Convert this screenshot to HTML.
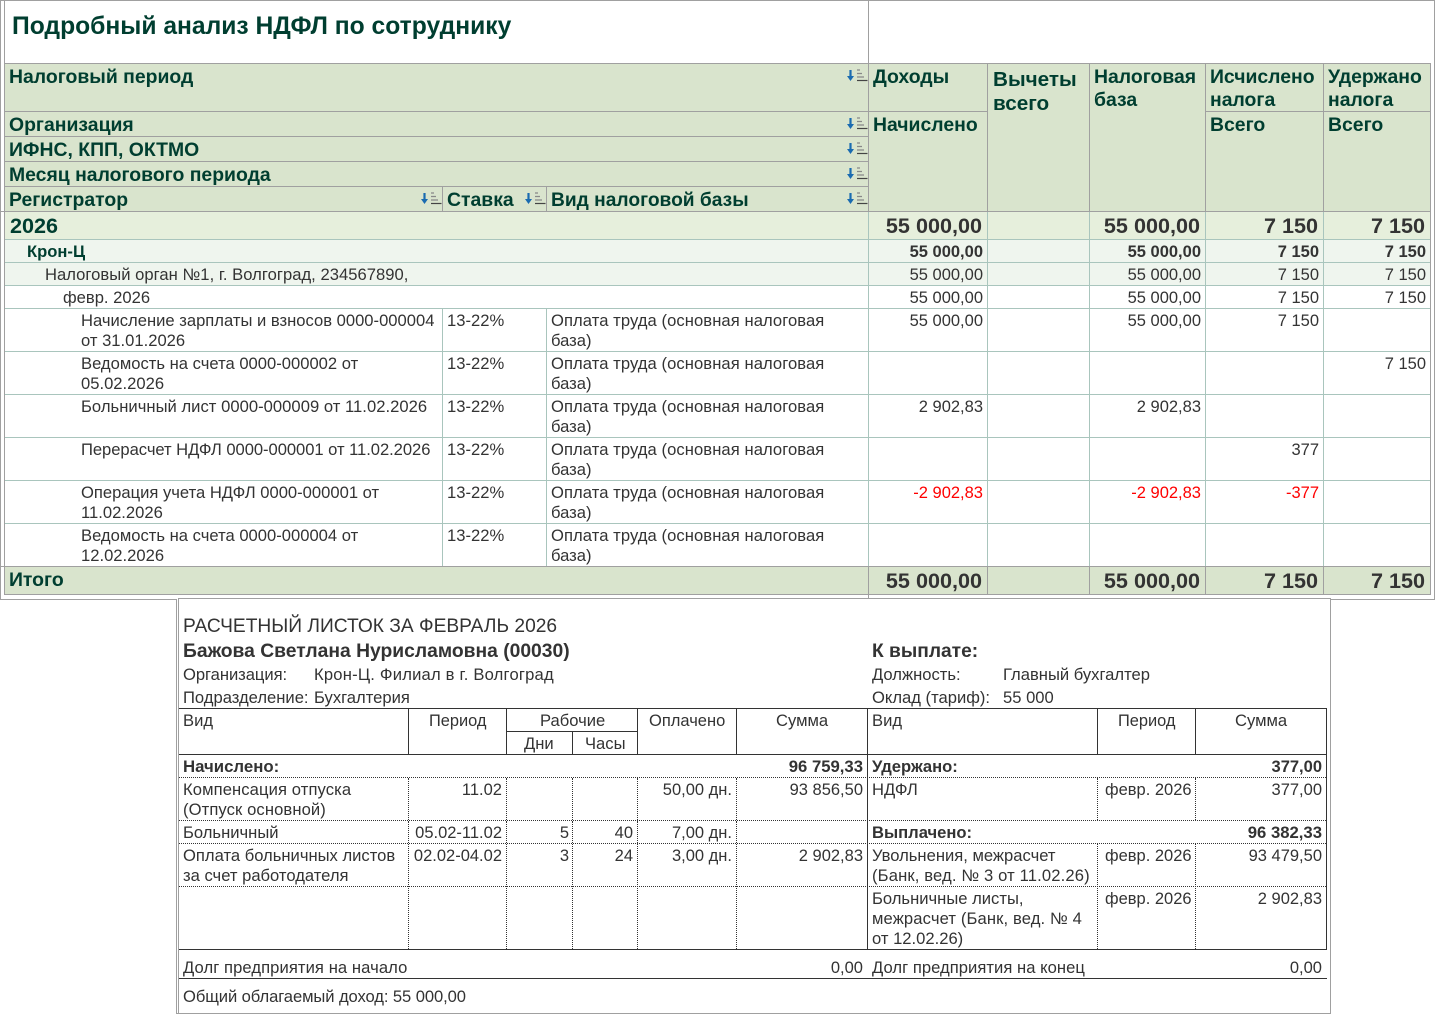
<!DOCTYPE html>
<html lang="ru"><head><meta charset="utf-8"><title>Анализ НДФЛ</title>
<style>
html,body{margin:0;padding:0;background:#fff}
#p{position:relative;width:1435px;height:1014px;overflow:hidden;background:#fff;font:16.6px/20px "Liberation Sans",sans-serif;color:#333}
#p div{position:absolute}
#p b,#p span{position:absolute;white-space:nowrap}
#p .o{left:0;width:1435px;height:1014px}
#p span[style*="right:"],#p b[style*="right:"]{font-size:16.5px}
#p .h{font-weight:bold;font-size:19.4px;line-height:25px;color:#003e30}
#p b.y{font-weight:bold;font-size:21.6px;line-height:26px;color:#333}
.g{background:#a9c5bd}.a{background:#a0a0a0}.k{background:#333}
.d{border-top:1px dotted #333;height:0}.v{border-left:1px dotted #333;width:0}
.r{color:#f00}
.m{font-size:19.2px;line-height:24px}
.w{letter-spacing:.07px}
svg{position:absolute}
</style></head><body><div id="p">
<svg width="0" height="0" style="position:absolute"><defs><symbol id="s" viewBox="0 0 21 13"><path d="M3.500 1v8" stroke="#1a6bb0" stroke-width="2.200"/><path d="M0 7h7L3.500 12z" fill="#1a6bb0"/><path d="M10 1h3M10 4.500h5M10 8h7" stroke="#888" stroke-width="1.200" fill="none"/><path d="M10 11.500h10.500" stroke="#444" stroke-width="1.200" fill="none"/></symbol></defs></svg>

<!-- fills -->
<div style="left:5px;top:64px;width:1426px;height:147px;background:#d9e4cd"></div>
<div style="left:5px;top:212px;width:1426px;height:27px;background:#e6efdc"></div>
<div style="left:5px;top:240px;width:1426px;height:45px;background:#eff5ee"></div>
<div style="left:5px;top:567px;width:1426px;height:27px;background:#d9e4cd"></div>

<!-- outer -->
<div class="a" style="left:0;top:0;width:1435px;height:1px"></div>
<div class="a" style="left:0;top:0;width:1px;height:600px"></div>
<div class="a" style="left:4px;top:0;width:1px;height:595px"></div>
<div class="a" style="left:1434px;top:0;width:1px;height:600px"></div>
<div class="a" style="left:868px;top:0;width:1px;height:64px"></div>
<div class="a" style="left:0;top:599px;width:177px;height:1px"></div>
<div class="a" style="left:1330px;top:599px;width:105px;height:1px"></div>
<div class="a" style="left:5px;top:63px;width:1426px;height:1px"></div>
<div class="a" style="left:1430px;top:63px;width:1px;height:532px"></div>
<div class="a" style="left:0;top:211px;width:1431px;height:1px"></div>
<div class="a" style="left:5px;top:111px;width:982px;height:1px"></div>
<div class="a" style="left:1205px;top:111px;width:225px;height:1px"></div>
<div class="a" style="left:5px;top:136px;width:863px;height:1px"></div>
<div class="a" style="left:5px;top:161px;width:863px;height:1px"></div>
<div class="a" style="left:5px;top:186px;width:863px;height:1px"></div>
<div class="a" style="left:442px;top:186px;width:1px;height:25px"></div>
<div class="a" style="left:546px;top:186px;width:1px;height:25px"></div>
<div class="a" style="left:868px;top:63px;width:1px;height:148px"></div>
<div class="a" style="left:987px;top:63px;width:1px;height:148px"></div>
<div class="a" style="left:1089px;top:63px;width:1px;height:148px"></div>
<div class="a" style="left:1205px;top:63px;width:1px;height:148px"></div>
<div class="a" style="left:1323px;top:63px;width:1px;height:148px"></div>

<!-- body rows -->
<div class="g" style="left:5px;top:239px;width:1425px;height:1px"></div>
<div class="g" style="left:5px;top:262px;width:1425px;height:1px"></div>
<div class="g" style="left:5px;top:285px;width:1425px;height:1px"></div>
<div class="g" style="left:5px;top:308px;width:1425px;height:1px"></div>
<div class="g" style="left:5px;top:351px;width:1425px;height:1px"></div>
<div class="g" style="left:5px;top:394px;width:1425px;height:1px"></div>
<div class="g" style="left:5px;top:437px;width:1425px;height:1px"></div>
<div class="g" style="left:5px;top:480px;width:1425px;height:1px"></div>
<div class="g" style="left:5px;top:523px;width:1425px;height:1px"></div>
<div class="a" style="left:0;top:566px;width:1431px;height:1px"></div>
<div class="a" style="left:4px;top:594px;width:1427px;height:1px"></div>
<div class="g" style="left:442px;top:308px;width:1px;height:258px"></div>
<div class="g" style="left:546px;top:308px;width:1px;height:258px"></div>
<div class="g" style="left:868px;top:212px;width:1px;height:354px"></div>
<div class="g" style="left:987px;top:212px;width:1px;height:354px"></div>
<div class="g" style="left:1089px;top:212px;width:1px;height:354px"></div>
<div class="g" style="left:1205px;top:212px;width:1px;height:354px"></div>
<div class="g" style="left:1323px;top:212px;width:1px;height:354px"></div>
<div class="a" style="left:868px;top:567px;width:1px;height:32px"></div>
<div class="a" style="left:987px;top:567px;width:1px;height:27px"></div>
<div class="a" style="left:1089px;top:567px;width:1px;height:27px"></div>
<div class="a" style="left:1205px;top:567px;width:1px;height:27px"></div>
<div class="a" style="left:1323px;top:567px;width:1px;height:27px"></div>

<!-- sort icons -->
<svg style="left:847px;top:69px" width="21" height="13"><use href="#s"/></svg>
<svg style="left:847px;top:117px" width="21" height="13"><use href="#s"/></svg>
<svg style="left:847px;top:142px" width="21" height="13"><use href="#s"/></svg>
<svg style="left:847px;top:167px" width="21" height="13"><use href="#s"/></svg>
<svg style="left:847px;top:192px" width="21" height="13"><use href="#s"/></svg>
<svg style="left:421px;top:192px" width="21" height="13"><use href="#s"/></svg>
<svg style="left:525px;top:192px" width="21" height="13"><use href="#s"/></svg>

<!-- 2026 -->
<b class="y" style="left:10px;top:213px;color:#003e30">2026</b>
<b class="y" style="right:453px;top:213px">55 000,00</b>
<b class="y" style="right:235px;top:213px">55 000,00</b>
<b class="y" style="right:117px;top:213px">7 150</b>
<b class="y" style="right:10px;top:213px">7 150</b>
<b class="y" style="right:453px;top:568px">55 000,00</b>
<b class="y" style="right:235px;top:568px">55 000,00</b>
<b class="y" style="right:117px;top:568px">7 150</b>
<b class="y" style="right:10px;top:568px">7 150</b>

<div class="o" style="top:1px">
<!-- header text -->
<b style="left:12px;top:11px;font-size:24.65px;line-height:30px;color:#003e30">Подробный анализ НДФЛ по сотруднику</b>
<span class="h" style="left:9px;top:64px">Налоговый период</span>
<span class="h" style="left:9px;top:112px">Организация</span>
<span class="h" style="left:9px;top:137px">ИФНС, КПП, ОКТМО</span>
<span class="h" style="left:9px;top:162px">Месяц налогового периода</span>
<span class="h" style="left:9px;top:187px">Регистратор</span>
<span class="h" style="left:447px;top:187px">Ставка</span>
<span class="h" style="left:551px;top:187px;font-size:19.2px">Вид налоговой базы</span>
<span class="h" style="left:873px;top:64px">Доходы</span>
<span class="h" style="left:873px;top:112px">Начислено</span>
<span class="h" style="left:993px;top:66px;font-size:20.7px">Вычеты</span>
<span class="h" style="left:993px;top:90px;font-size:20.7px">всего</span>
<span class="h" style="left:1094px;top:64px">Налоговая</span>
<span class="h" style="left:1094px;top:87px">база</span>
<span class="h" style="left:1210px;top:64px">Исчислено</span>
<span class="h" style="left:1210px;top:87px">налога</span>
<span class="h" style="left:1210px;top:112px">Всего</span>
<span class="h" style="left:1328px;top:64px">Удержано</span>
<span class="h" style="left:1328px;top:87px">налога</span>
<span class="h" style="left:1328px;top:112px">Всего</span>
<!-- Итого -->
<span class="h" style="left:9px;top:567px">Итого</span>
</div>

<!-- Крон -->
<b style="left:27px;top:242px;color:#003e30">Крон-Ц</b>
<b style="right:452px;top:242px">55 000,00</b>
<b style="right:234px;top:242px">55 000,00</b>
<b style="right:116px;top:242px">7 150</b>
<b style="right:9px;top:242px">7 150</b>
<!-- Налоговый орган -->
<span class="w" style="left:45px;top:265px;letter-spacing:.03px">Налоговый орган №1, г. Волгоград, 234567890,</span>
<span style="right:452px;top:265px">55 000,00</span>
<span style="right:234px;top:265px">55 000,00</span>
<span style="right:116px;top:265px">7 150</span>
<span style="right:9px;top:265px">7 150</span>
<!-- февр -->
<span style="left:63px;top:288px">февр. 2026</span>
<span style="right:452px;top:288px">55 000,00</span>
<span style="right:234px;top:288px">55 000,00</span>
<span style="right:116px;top:288px">7 150</span>
<span style="right:9px;top:288px">7 150</span>
<!-- detail -->
<span style="left:81px;top:311px">Начисление зарплаты и взносов 0000-000004</span>
<span style="left:81px;top:331px">от 31.01.2026</span>
<span style="left:447px;top:311px">13-22%</span>
<span class="w" style="left:551px;top:311px">Оплата труда (основная налоговая</span>
<span style="left:551px;top:331px">база)</span>
<span style="right:452px;top:311px">55 000,00</span>
<span style="right:234px;top:311px">55 000,00</span>
<span style="right:116px;top:311px">7 150</span>

<span style="left:81px;top:354px">Ведомость на счета 0000-000002 от</span>
<span style="left:81px;top:374px">05.02.2026</span>
<span style="left:447px;top:354px">13-22%</span>
<span class="w" style="left:551px;top:354px">Оплата труда (основная налоговая</span>
<span style="left:551px;top:374px">база)</span>
<span style="right:9px;top:354px">7 150</span>

<span class="w" style="left:81px;top:397px;letter-spacing:.03px">Больничный лист 0000-000009 от 11.02.2026</span>
<span style="left:447px;top:397px">13-22%</span>
<span class="w" style="left:551px;top:397px">Оплата труда (основная налоговая</span>
<span style="left:551px;top:417px">база)</span>
<span style="right:452px;top:397px">2 902,83</span>
<span style="right:234px;top:397px">2 902,83</span>

<span class="w" style="left:81px;top:440px;letter-spacing:-.05px">Перерасчет НДФЛ 0000-000001 от 11.02.2026</span>
<span style="left:447px;top:440px">13-22%</span>
<span class="w" style="left:551px;top:440px">Оплата труда (основная налоговая</span>
<span style="left:551px;top:460px">база)</span>
<span style="right:116px;top:440px">377</span>

<span style="left:81px;top:483px">Операция учета НДФЛ 0000-000001 от</span>
<span style="left:81px;top:503px">11.02.2026</span>
<span style="left:447px;top:483px">13-22%</span>
<span class="w" style="left:551px;top:483px">Оплата труда (основная налоговая</span>
<span style="left:551px;top:503px">база)</span>
<span class="r" style="right:452px;top:483px">-2 902,83</span>
<span class="r" style="right:234px;top:483px">-2 902,83</span>
<span class="r" style="right:116px;top:483px">-377</span>

<span style="left:81px;top:526px">Ведомость на счета 0000-000004 от</span>
<span style="left:81px;top:546px">12.02.2026</span>
<span style="left:447px;top:526px">13-22%</span>
<span class="w" style="left:551px;top:526px">Оплата труда (основная налоговая</span>
<span style="left:551px;top:546px">база)</span>

<!-- sheet 2 -->
<div style="left:178px;top:598px;width:1153px;height:416px;background:#fff"></div>
<div class="a" style="left:178px;top:598px;width:1153px;height:1px"></div>
<div class="a" style="left:176px;top:599px;width:1px;height:415px"></div>
<div class="a" style="left:178px;top:598px;width:1px;height:416px"></div>
<div class="a" style="left:1330px;top:598px;width:1px;height:416px"></div>
<div class="a" style="left:176px;top:1013px;width:1155px;height:1px"></div>

<span class="m" style="left:183px;top:615px">РАСЧЕТНЫЙ ЛИСТОК ЗА ФЕВРАЛЬ 2026</span>
<b class="m" style="left:183px;top:640px;font-size:19.3px">Бажова Светлана Нурисламовна (00030)</b>
<b class="m" style="left:872px;top:640px">К выплате:</b>

<!-- table lines -->
<div class="k" style="left:179px;top:708px;width:1148px;height:1px"></div>
<div class="k" style="left:179px;top:754px;width:1148px;height:1px"></div>
<div class="k" style="left:179px;top:949px;width:1148px;height:1px"></div>
<div class="k" style="left:179px;top:978px;width:1148px;height:1px"></div>
<div class="k" style="left:506px;top:731px;width:131px;height:1px"></div>
<div class="k" style="left:408px;top:708px;width:1px;height:46px"></div>
<div class="k" style="left:506px;top:708px;width:1px;height:46px"></div>
<div class="k" style="left:572px;top:731px;width:1px;height:23px"></div>
<div class="k" style="left:637px;top:708px;width:1px;height:46px"></div>
<div class="k" style="left:736px;top:708px;width:1px;height:46px"></div>
<div class="k" style="left:867px;top:708px;width:1px;height:241px"></div>
<div class="k" style="left:1097px;top:708px;width:1px;height:46px"></div>
<div class="k" style="left:1195px;top:708px;width:1px;height:46px"></div>
<div class="k" style="left:1326px;top:708px;width:1px;height:241px"></div>
<div class="d" style="left:179px;top:777px;width:1147px"></div>
<div class="d" style="left:179px;top:820px;width:1147px"></div>
<div class="d" style="left:179px;top:843px;width:1147px"></div>
<div class="d" style="left:179px;top:886px;width:1147px"></div>
<div class="v" style="left:408px;top:778px;height:42px"></div>
<div class="v" style="left:506px;top:778px;height:42px"></div>
<div class="v" style="left:572px;top:778px;height:42px"></div>
<div class="v" style="left:637px;top:778px;height:42px"></div>
<div class="v" style="left:736px;top:778px;height:42px"></div>
<div class="v" style="left:408px;top:821px;height:128px"></div>
<div class="v" style="left:506px;top:821px;height:128px"></div>
<div class="v" style="left:572px;top:821px;height:128px"></div>
<div class="v" style="left:637px;top:821px;height:128px"></div>
<div class="v" style="left:736px;top:821px;height:128px"></div>
<div class="v" style="left:1097px;top:778px;height:42px"></div>
<div class="v" style="left:1195px;top:778px;height:42px"></div>
<div class="v" style="left:1097px;top:844px;height:105px"></div>
<div class="v" style="left:1195px;top:844px;height:105px"></div>

<div class="o" style="top:1px">
<span style="left:183px;top:664px;letter-spacing:-.05px">Организация:</span>
<span style="left:314px;top:664px;letter-spacing:.2px">Крон-Ц. Филиал в г. Волгоград</span>
<span style="left:183px;top:687px">Подразделение:</span>
<span style="left:314px;top:687px">Бухгалтерия</span>
<span style="left:872px;top:664px">Должность:</span>
<span style="left:1003px;top:664px">Главный бухгалтер</span>
<span style="left:872px;top:687px">Оклад (тариф):</span>
<span style="left:1003px;top:687px">55 000</span>
<!-- table text -->
<span style="left:183px;top:710px">Вид</span>
<span style="left:429px;top:710px;font-size:16.4px">Период</span>
<span style="left:540px;top:710px">Рабочие</span>
<span style="left:649px;top:710px;font-size:16.5px">Оплачено</span>
<span style="left:776px;top:710px">Сумма</span>
<span style="left:524px;top:733px">Дни</span>
<span style="left:585px;top:733px">Часы</span>
<span style="left:872px;top:710px">Вид</span>
<span style="left:1118px;top:710px;font-size:16.4px">Период</span>
<span style="left:1235px;top:710px">Сумма</span>

<b style="left:183px;top:756px;font-size:16.8px">Начислено:</b>
<b style="right:572px;top:756px;font-size:16.7px">96 759,33</b>
<b style="left:872px;top:756px">Удержано:</b>
<b style="right:113px;top:756px">377,00</b>

<span style="left:183px;top:779px;letter-spacing:.1px">Компенсация отпуска</span>
<span style="left:183px;top:799px;letter-spacing:.1px">(Отпуск основной)</span>
<span style="right:933px;top:779px">11.02</span>
<span style="right:703px;top:779px">50,00 дн.</span>
<span style="right:572px;top:779px">93 856,50</span>
<span style="left:872px;top:779px">НДФЛ</span>
<span style="left:1105px;top:779px;font-size:16.5px">февр. 2026</span>
<span style="right:113px;top:779px">377,00</span>

<span style="left:183px;top:822px">Больничный</span>
<span style="right:933px;top:822px">05.02-11.02</span>
<span style="right:866px;top:822px">5</span>
<span style="right:802px;top:822px">40</span>
<span style="right:703px;top:822px">7,00 дн.</span>
<b style="left:872px;top:822px">Выплачено:</b>
<b style="right:113px;top:822px;font-size:16.7px">96 382,33</b>

<span style="left:183px;top:845px">Оплата больничных листов</span>
<span style="left:183px;top:865px">за счет работодателя</span>
<span style="right:933px;top:845px">02.02-04.02</span>
<span style="right:866px;top:845px">3</span>
<span style="right:802px;top:845px">24</span>
<span style="right:703px;top:845px">3,00 дн.</span>
<span style="right:572px;top:845px">2 902,83</span>
<span style="left:872px;top:845px">Увольнения, межрасчет</span>
<span style="left:872px;top:865px;letter-spacing:.14px">(Банк, вед. № 3 от 11.02.26)</span>
<span style="left:1105px;top:845px;font-size:16.5px">февр. 2026</span>
<span style="right:113px;top:845px">93 479,50</span>

<span style="left:872px;top:888px">Больничные листы,</span>
<span style="left:872px;top:908px;letter-spacing:.12px">межрасчет (Банк, вед. № 4</span>
<span style="left:872px;top:928px">от 12.02.26)</span>
<span style="left:1105px;top:888px;font-size:16.5px">февр. 2026</span>
<span style="right:113px;top:888px">2 902,83</span>

<span style="left:183px;top:957px;letter-spacing:.08px">Долг предприятия на начало</span>
<span style="right:572px;top:957px">0,00</span>
<span style="left:872px;top:957px;letter-spacing:.04px">Долг предприятия на конец</span>
<span style="right:113px;top:957px">0,00</span>
<span style="left:183px;top:986px;letter-spacing:-.09px">Общий облагаемый доход: 55 000,00</span>
</div>
</div></body></html>
